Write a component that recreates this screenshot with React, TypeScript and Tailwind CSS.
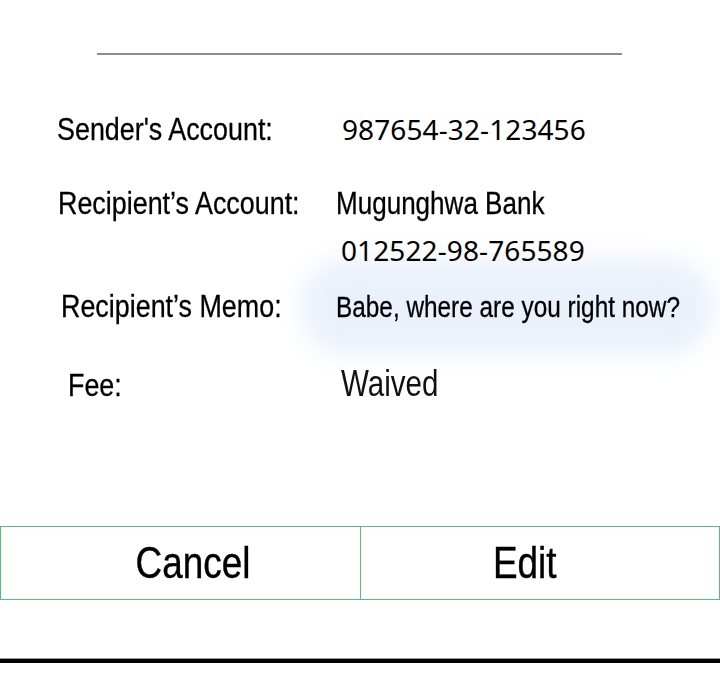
const sans = "font-['Liberation_Sans',Arial,sans-serif]";
const digits = "font-['Noto_Sans','DejaVu_Sans',sans-serif]";
// condensed look: Liberation Sans squeezed horizontally
const squeeze = "inline-block origin-left scale-x-[0.84] whitespace-nowrap [-webkit-text-stroke:0.3px_black]";

function Row({
  label,
  labelPad,
  children,
  className,
}: {
  label: string;
  labelPad: string;
  children: React.ReactNode;
  className?: string;
}) {
  return (
    <div className={`flex shrink-0 items-baseline ${className ?? ""}`}>
      <div className={`w-[336px] shrink-0 ${labelPad} text-[32px] leading-[40px] text-black`}>
        <span className={squeeze}>{label}</span>
      </div>
      <div className="flex-1">{children}</div>
    </div>
  );
}

export default function App() {
  return (
    <div className={`isolate flex h-[700px] w-[720px] flex-col overflow-hidden bg-white ${sans}`}>
      {/* divider at the top of the sheet */}
      <div className="ml-[97px] mt-[53px] h-[2px] w-[525px] shrink-0 bg-[#8c8c8c]" />

      <div className="mt-[53px] flex shrink-0 flex-col">
        <Row label="Sender's Account:" labelPad="pl-[57px]">
          <span className={`${digits} whitespace-nowrap pl-[6px] text-[28px] tracking-[0.1px] text-black`}>
            987654-32-123456
          </span>
        </Row>

        <Row label="Recipient’s Account:" labelPad="pl-[58px]" className="mt-[33px]">
          <div className="flex flex-col">
            <span className="text-[31px] leading-[40px] text-black">
              <span className={squeeze}>Mugunghwa Bank</span>
            </span>
            <span className={`${digits} mt-[6px] whitespace-nowrap pl-[5px] text-[28px] leading-[40px] tracking-[0.1px] text-black`}>
              012522-98-765589
            </span>
          </div>
        </Row>

        <Row label="Recipient’s Memo:" labelPad="pl-[61px]" className="mt-[16px]">
          <span className="relative inline-block w-[342px]">
            <span className="absolute -inset-x-[36px] -inset-y-[28px] -z-10 rounded-full bg-[#eaf1fb] blur-[12px]" />
            <span className="text-[29px] leading-[40px] text-black">
              <span className={squeeze}>Babe, where are you right now?</span>
            </span>
          </span>
        </Row>

        <Row label="Fee:" labelPad="pl-[68px]" className="mt-[37px]">
          <span className="pl-[5px] text-[36px] leading-[40px] text-[#111]">
            <span className="inline-block origin-left scale-x-[0.82] whitespace-nowrap">Waived</span>
          </span>
        </Row>
      </div>

      {/* action buttons */}
      <div className="mt-[121px] flex h-[74px] shrink-0 border-y border-[#5cb97b]">
        <button className="flex flex-1 items-center justify-center border-x border-[#5cb97b] text-[45px] text-black">
          <span className="ml-[26px] inline-block scale-x-[0.82] whitespace-nowrap [-webkit-text-stroke:0.4px_black]">
            Cancel
          </span>
        </button>
        <button className="flex flex-1 items-center justify-center border-r border-[#5cb97b] text-[45px] text-black">
          <span className="-ml-[30px] inline-block scale-x-[0.82] whitespace-nowrap [-webkit-text-stroke:0.4px_black]">
            Edit
          </span>
        </button>
      </div>

      <div className="mt-[58px] shrink-0 border-t border-[#9a9a9a]" />
      <div className="h-[4px] shrink-0 bg-black" />
    </div>
  );
}
